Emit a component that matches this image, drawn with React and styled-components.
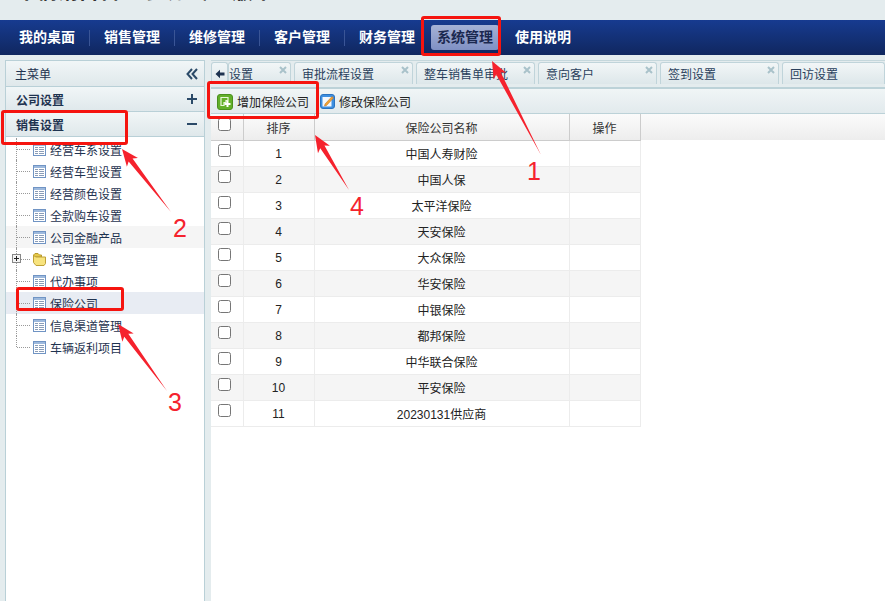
import React from "react";
import styled, { createGlobalStyle } from "styled-components";

const navItems = ["我的桌面", "销售管理", "维修管理", "客户管理", "财务管理", "系统管理", "使用说明"];
const tabs = [
  { label: "设置", width: 63, pad: 0 },
  { label: "审批流程设置", width: 119, pad: 7 },
  { label: "整车销售单审批", width: 119, pad: 7 },
  { label: "意向客户", width: 119, pad: 7 },
  { label: "签到设置", width: 119, pad: 7 },
  { label: "回访设置", width: 103, pad: 7, open: true },
];
const treeItems = [
  "经营车系设置",
  "经营车型设置",
  "经营颜色设置",
  "全款购车设置",
  "公司金融产品",
  "试驾管理",
  "代办事项",
  "保险公司",
  "信息渠道管理",
  "车辆返利项目",
];
const companies = [
  "中国人寿财险",
  "中国人保",
  "太平洋保险",
  "天安保险",
  "大众保险",
  "华安保险",
  "中银保险",
  "都邦保险",
  "中华联合保险",
  "平安保险",
  "20230131供应商",
];

const GlobalStyle = createGlobalStyle`
  html, body {
    margin: 0;
    padding: 0;
    overflow: hidden;
    background: #e4ecee;
  }
  * {
    box-sizing: border-box;
  }
`;

const Page = styled.div`
  position: relative;
  width: 885px;
  height: 601px;
  overflow: hidden;
  display: flex;
  flex-direction: column;
  font-family: "Liberation Sans", "Noto Sans CJK SC", sans-serif;
  font-size: 12px;
  color: #1f3350;
`;

const TitleBar = styled.div`
  height: 20px;
  flex: none;
  overflow: hidden;
  background: #e4ecee;
`;

const SiteTitle = styled.div`
  margin: -22px 0 0 15px;
  font-size: 21px;
  line-height: 26px;
  font-weight: 700;
  color: #333;
  white-space: nowrap;
`;

const NavBar = styled.nav`
  height: 35px;
  flex: none;
  display: flex;
  align-items: center;
  padding-left: 5px;
  background: linear-gradient(#173b90, #10275f);
`;

const NavItem = styled.div`
  font-size: 14px;
  font-weight: 700;
  line-height: 25px;
  height: ${(p) => (p.$active ? "25px" : "16px")};
  display: flex;
  align-items: center;
  white-space: nowrap;
  color: ${(p) => (p.$active ? "#1b2850" : "#fff")};
  padding: ${(p) => (p.$active ? "0 6px" : "0 14px")};
  margin: ${(p) => (p.$active ? "0 2px" : "0")};
  border-radius: ${(p) => (p.$active ? "3px" : "0")};
  background: ${(p) => (p.$active ? "linear-gradient(#a6b2d6, #7f90c4)" : "none")};
  border-right: ${(p) => (p.$divider ? "1px solid #3a5596" : "none")};
`;

const Content = styled.div`
  flex: 1;
  min-height: 0;
  display: flex;
  gap: 6px;
  padding: 5px 0 0 5px;
`;

const Sidebar = styled.aside`
  width: 200px;
  flex: none;
  display: flex;
  flex-direction: column;
  background: #fff;
  border: 1px solid #b9d0d7;
  border-bottom: none;
`;

const SideHeader = styled.div`
  height: 26px;
  flex: none;
  display: flex;
  align-items: center;
  justify-content: space-between;
  padding: 0 6px 0 9px;
  background: linear-gradient(#f1f6f7, #dfe8eb);
  border-bottom: 1px solid #b9d0d7;
`;

const AccordionHeader = styled(SideHeader)`
  height: 25px;
  padding: 0 6px 0 10px;
  font-weight: 700;
`;

const Tree = styled.div`
  display: flex;
  flex-direction: column;
  padding-top: 1px;
`;

const TreeRow = styled.div`
  position: relative;
  height: 22px;
  flex: none;
  display: flex;
  align-items: center;
  gap: 4px;
  padding-left: 27px;
  white-space: nowrap;
  background: ${(p) => (p.$selected ? "#e8ecf3" : p.$hover ? "#f5f5f5" : "#fff")};

  &::before {
    content: "";
    position: absolute;
    left: 10px;
    top: 0;
    height: ${(p) => (p.$last ? "11px" : "22px")};
    border-left: 1px dotted #999;
  }

  &::after {
    content: "";
    position: absolute;
    left: 11px;
    top: 11px;
    width: 13px;
    border-top: 1px dotted #999;
  }
`;

const Expander = styled.span`
  position: absolute;
  left: 6px;
  top: 6px;
  z-index: 1;
  display: flex;
  line-height: 0;
`;

const Main = styled.main`
  flex: 1;
  min-width: 0;
  display: flex;
  flex-direction: column;
`;

const TabStrip = styled.div`
  height: 24px;
  flex: none;
  display: flex;
  gap: 3px;
  padding-top: 1px;
  border-top: 1px solid #c5d7dc;
  overflow: hidden;
`;

const ScrollLeft = styled.div`
  width: 17px;
  flex: none;
  margin-right: -3px;
  display: flex;
  align-items: center;
  justify-content: center;
  background: linear-gradient(#f1f6f7, #dfe8eb);
  border: 1px solid #c0d4da;
  border-bottom: none;
  border-radius: 3px 3px 0 0;
`;

const Tab = styled.div`
  position: relative;
  flex: none;
  width: ${(p) => p.$width}px;
  display: flex;
  align-items: center;
  padding-left: ${(p) => p.$pad}px;
  padding-bottom: 1px;
  white-space: nowrap;
  overflow: hidden;
  color: #2a3f5c;
  background: linear-gradient(#f2f6f7, #dde7ea);
  border: 1px solid #c0d4da;
  border-bottom: none;
  border-radius: 3px 3px 0 0;
`;

const TabClose = styled.span`
  position: absolute;
  right: 3px;
  top: 3px;
  display: flex;
  line-height: 0;
`;

const Toolbar = styled.div`
  height: 27px;
  flex: none;
  margin-top: 3px;
  display: flex;
  align-items: center;
  gap: 11px;
  padding: 1px 0 0 6px;
  background: linear-gradient(#f0f5f6, #e2eaed);
  border-top: 2px solid #bcd2d8;
  border-bottom: 1px solid #bcd2d8;
`;

const ToolButton = styled.div`
  display: flex;
  align-items: center;
  gap: 4px;
  color: #222;
  white-space: nowrap;
`;

const TableArea = styled.div`
  flex: 1;
  background: #fff linear-gradient(#fbfbfb, #ededed) top left / 100% 26px no-repeat;
`;

const Table = styled.table`
  width: 429px;
  table-layout: fixed;
  border-collapse: collapse;
  color: #222;
`;

const HeadCell = styled.th`
  width: ${(p) => p.$width}px;
  height: 26px;
  padding: 1px 0 0;
  font-weight: 400;
  vertical-align: middle;
  color: #333;
  border-right: 1px solid #ccc;
  border-bottom: 1px solid #ccc;
`;

const Cell = styled.td`
  height: 26px;
  padding: 0;
  text-align: center;
  vertical-align: middle;
  border-right: 1px solid #ececec;
  border-bottom: 1px solid #ececec;
`;

const Row = styled.tr`
  background: ${(p) => (p.$even ? "#f5f5f5" : "#fff")};
`;

const CheckCell = styled.div`
  display: flex;
  height: 25px;
  padding: 3px 0 0 7px;
`;

const Check = styled.input.attrs({ type: "checkbox" })`
  width: 13px;
  height: 13px;
  margin: 0;
`;

const Annotations = styled.svg`
  position: absolute;
  left: 0;
  top: 0;
  pointer-events: none;
`;

const Mark = styled.span`
  position: absolute;
  left: ${(p) => p.$x}px;
  top: ${(p) => p.$y}px;
  font-size: 25px;
  line-height: 28px;
  color: #f5222d;
  font-family: "Liberation Sans", sans-serif;
`;

const Callout = styled.div`
  position: absolute;
  left: ${(p) => p.$x}px;
  top: ${(p) => p.$y}px;
  width: ${(p) => p.$w}px;
  height: ${(p) => p.$h}px;
  border: 3px solid #f5140f;
  border-radius: 3px;
`;

const DoubleLeft = () => (
  <svg width="12" height="12" viewBox="0 0 12 12" fill="none" stroke="#2b4a68" strokeWidth="2">
    <path d="M6 1 1.5 6 6 11M11 1 6.5 6 11 11" />
  </svg>
);

const Plus = () => (
  <svg width="12" height="12" viewBox="0 0 12 12" fill="none" stroke="#2b4a68" strokeWidth="2">
    <path d="M1 6h10M6 1v10" />
  </svg>
);

const Minus = () => (
  <svg width="12" height="12" viewBox="0 0 12 12" fill="none" stroke="#2b4a68" strokeWidth="2">
    <path d="M1 6h10" />
  </svg>
);

const ArrowLeft = () => (
  <svg width="10" height="10" viewBox="0 0 10 10">
    <path d="M0.5 5 5 0.8v2.7h4.5v3H5v2.7z" fill="#1e3350" />
  </svg>
);

const CloseIcon = () => (
  <svg width="8" height="8" viewBox="0 0 8 8" fill="none" stroke="#a9c2ca" strokeWidth="2">
    <path d="M1 1l6 6M7 1 1 7" />
  </svg>
);

const TableIcon = () => (
  <svg width="13" height="13" viewBox="0 0 13 13">
    <rect x="0.5" y="0.5" width="12" height="12" fill="#fff" stroke="#7094c4" />
    <rect x="1" y="1" width="11" height="2" fill="#9db9dd" />
    <path d="M2 4.5h3M6 4.5h5M2 6.5h3M6 6.5h5M2 8.5h3M6 8.5h5M2 10.5h3M6 10.5h5" stroke="#8a9db8" strokeWidth="1" />
  </svg>
);

const FolderIcon = () => (
  <svg width="13" height="13" viewBox="0 0 13 13">
    <path d="M0.5 2 2 0.5h3L6.5 2h2v2H0.5z" fill="#e6c94a" stroke="#b89a2c" />
    <path d="M0.5 2.5 3 4h9.5v6.5L11 12.5H3L0.5 9.5z" fill="#f7e37e" stroke="#bfa136" />
  </svg>
);

const PlusBox = () => (
  <svg width="9" height="9" viewBox="0 0 9 9">
    <rect x="0.5" y="0.5" width="8" height="8" fill="#f4f4f4" stroke="#888" />
    <path d="M2 4.5h5M4.5 2v5" stroke="#222" />
  </svg>
);

const AddIcon = () => (
  <svg width="16" height="16" viewBox="0 0 16 16">
    <rect x="0.5" y="0.5" width="15" height="15" rx="2.5" fill="#62b02a" stroke="#4b9020" />
    <path d="M4 3.5h7v3H9v2H7v3H4z" fill="none" stroke="#eaf7dc" strokeWidth="1.2" />
    <path d="M7.5 10h6M10.5 7v6" stroke="#fff" strokeWidth="2" />
  </svg>
);

const EditIcon = () => (
  <svg width="15" height="15" viewBox="0 0 15 15">
    <rect x="0.5" y="0.5" width="14" height="14" rx="2.5" fill="#3d8fe0" stroke="#2a73c0" />
    <rect x="2.5" y="3" width="9" height="9.5" fill="#f3f8fd" />
    <path d="M5 10 12 2.5l1.5 1.5L6.5 11.5 4.5 12z" fill="#f2a531" stroke="#b9651a" strokeWidth="0.5" />
  </svg>
);

const arrowHead = (x1, y1, x2, y2) => {
  // long thin tail that widens toward a barbed tip
  const a = Math.atan2(y2 - y1, x2 - x1);
  const pt = (d, s) => [
    x2 - Math.cos(a) * d - Math.sin(a) * s,
    y2 - Math.sin(a) * d + Math.cos(a) * s,
  ];
  const points = [[x1, y1], pt(14, 2.5), pt(17, 7), [x2, y2], pt(17, -7), pt(14, -2.5)];
  return points.map((p) => p.join(",")).join(" ");
};

const App = () => {
  return (
    <Page>
      <GlobalStyle />
      <TitleBar>
        <SiteTitle>车辆销售管理系统-专业版本</SiteTitle>
      </TitleBar>
      <NavBar>
        {navItems.map((name, i) => (
          <NavItem key={name} $active={i === 5} $divider={i < 4}>
            {name}
          </NavItem>
        ))}
      </NavBar>
      <Content>
        <Sidebar>
          <SideHeader>
            主菜单
            <DoubleLeft />
          </SideHeader>
          <AccordionHeader>
            公司设置
            <Plus />
          </AccordionHeader>
          <AccordionHeader>
            销售设置
            <Minus />
          </AccordionHeader>
          <Tree>
            {treeItems.map((name, i) => (
              <TreeRow key={name} $hover={i === 4} $selected={i === 7} $last={i === 9}>
                {i === 5 && (
                  <Expander>
                    <PlusBox />
                  </Expander>
                )}
                {i === 5 ? <FolderIcon /> : <TableIcon />}
                {name}
              </TreeRow>
            ))}
          </Tree>
        </Sidebar>
        <Main>
          <TabStrip>
            <ScrollLeft>
              <ArrowLeft />
            </ScrollLeft>
            {tabs.map((tab) => (
              <Tab key={tab.label} $width={tab.width} $pad={tab.pad}>
                {tab.label}
                {!tab.open && (
                  <TabClose>
                    <CloseIcon />
                  </TabClose>
                )}
              </Tab>
            ))}
          </TabStrip>
          <Toolbar>
            <ToolButton>
              <AddIcon />
              增加保险公司
            </ToolButton>
            <ToolButton>
              <EditIcon />
              修改保险公司
            </ToolButton>
          </Toolbar>
          <TableArea>
            <Table>
              <thead>
                <tr>
                  <HeadCell $width={32}>
                    <CheckCell>
                      <Check />
                    </CheckCell>
                  </HeadCell>
                  <HeadCell $width={71}>排序</HeadCell>
                  <HeadCell $width={255}>保险公司名称</HeadCell>
                  <HeadCell $width={71}>操作</HeadCell>
                </tr>
              </thead>
              <tbody>
                {companies.map((name, i) => (
                  <Row key={name} $even={i % 2 === 1}>
                    <Cell>
                      <CheckCell>
                        <Check />
                      </CheckCell>
                    </Cell>
                    <Cell>{i + 1}</Cell>
                    <Cell>{name}</Cell>
                    <Cell />
                  </Row>
                ))}
              </tbody>
            </Table>
          </TableArea>
        </Main>
      </Content>

      <Callout $x={421} $y={16} $w={80} $h={40} />
      <Callout $x={1} $y={110} $w={127} $h={35} />
      <Callout $x={16} $y={287} $w={108} $h={24} />
      <Callout $x={207} $y={81} $w={112} $h={38} />
      <Annotations width="885" height="601" viewBox="0 0 885 601">
        <polygon points={arrowHead(541, 155, 492, 61)} fill="#f5222d" />
        <polygon points={arrowHead(171, 212, 122, 149)} fill="#f5222d" />
        <polygon points={arrowHead(167, 391, 118, 324)} fill="#f5222d" />
        <polygon points={arrowHead(349, 190, 315, 135)} fill="#f5222d" />
      </Annotations>
      <Mark $x={527} $y={157}>1</Mark>
      <Mark $x={173} $y={214}>2</Mark>
      <Mark $x={168} $y={388}>3</Mark>
      <Mark $x={350} $y={192}>4</Mark>
    </Page>
  );
};

export default App;
